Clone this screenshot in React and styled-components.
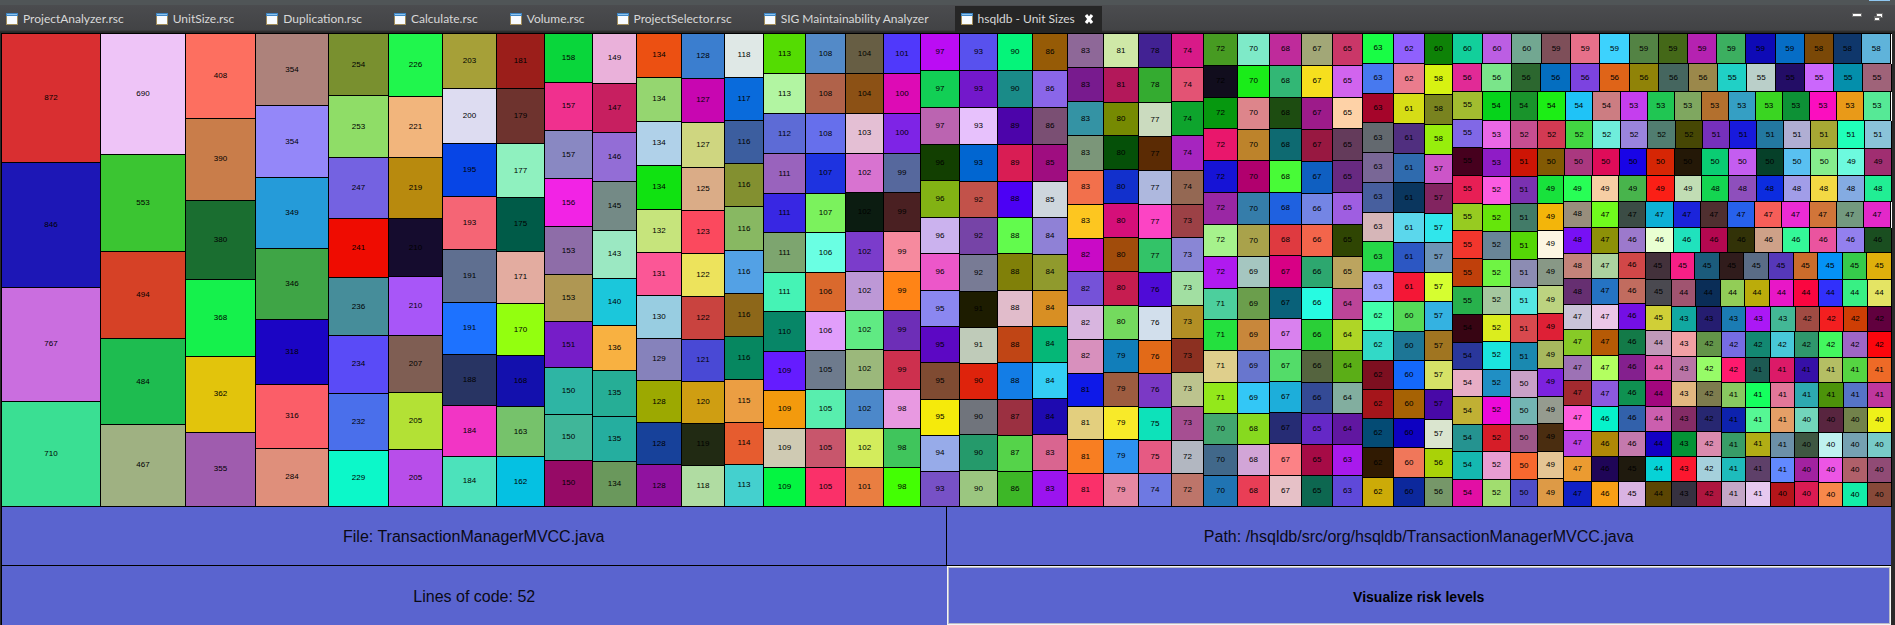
import React from "react";
import styled, { createGlobalStyle } from "styled-components";

const GlobalStyle = createGlobalStyle`
  *, *::before, *::after { box-sizing: border-box; }
  body { margin: 0; background: #2a2a2a; }
  button { font: inherit; color: inherit; }
`;

/* Each strip takes `size` of what is left of the map, along the axis across it.
   Units are "lines of code:colour", from the largest to the smallest. */
const strips = [
  ["col", 99, "872:d92f31 846:1d17b6 767:ca6edf 710:3adf93"],
  ["col", 85, "690:eec4f7 553:3bc532 494:d64126 484:1ebc50 467:9fb182"],
  ["col", 70, "408:fd6f60 390:c97d4a 380:1a6e30 368:15f14c 362:e2c40c 355:9f5cae"],
  ["col", 73, "354:ad827b 354:9487f9 349:259bd9 346:3fa546 318:1b05c4 316:fb5e68 284:df8f7b"],
  ["col", 60, "254:79902f 253:8fdd67 247:7462e1 241:ef0c01 236:468d9a 234:5a4bf7 232:4a6feb 229:0cf8c9"],
  ["col", 54, "226:20f64d 221:f2b57c 219:b88a0e 210:150c2e 210:a856f8 207:7f5e53 205:b3e135 205:b84eea"],
  ["col", 54, "203:a6a038 200:dddcf1 195:0745e6 193:f56575 191:5f6f90 191:1d72ff 188:283463 184:f235c5 184:4ce2bb"],
  ["col", 48, "181:9b1e1a 179:6e332e 177:8ff1bf 175:005b48 171:e3aca0 170:93ff0f 168:1310ad 163:76c26b 162:05c1e2"],
  ["col", 48, "158:09d63b 157:f0308e 157:8988c2 156:f223e5 153:8e6da8 153:af9753 151:761dc8 150:2eb5a4 150:40b699 150:960a66"],
  ["col", 44, "149:eab1da 147:c71f60 146:936dd6 145:748a86 143:9be8c2 140:1bc7db 136:f8b141 135:26ae96 135:25ae9f 134:6a985c"],
  ["col", 45, "134:ec5012 134:95d670 134:b0d1e9 134:10e211 132:c6e47c 131:fb5796 130:98cde1 129:8682bb 128:9ca901 128:17419a 128:90129f"],
  ["col", 43, "128:3b7ecf 127:c806b1 127:cfd680 125:daac87 123:fb495e 122:ede35c 122:c9433f 121:4949d5 120:cf9e12 119:212a13 118:b0dca2"],
  ["col", 39, "118:dfe8e6 117:096bdc 116:3c5e9f 116:839030 116:88b862 116:53a1e5 116:8d6719 116:068760 115:eb9e43 114:e65c2f 113:44d0ce"],
  ["col", 42, "113:54dc02 113:b2f5a2 112:5d6bd6 111:9963bd 111:3827e3 111:7da56f 111:45f3b5 110:078667 109:651cff 109:f39a0d 109:cfcab3 109:04f541"],
  ["col", 40, "108:538ac8 108:b0624a 108:666fec 107:1e33e0 107:7bf25d 106:6affe3 106:da692d 106:e19efb 105:6e7b8d 105:58eeae 105:c8566c 105:fa3069"],
  ["col", 38, "104:675e44 104:8c5115 103:e4bfd4 102:d873d0 102:0b1c11 102:7b3ccb 102:bd98d6 102:60ea83 102:9bb87b 102:4c88ca 102:d3ec5c 101:e97e41"],
  ["col", 37, "101:5039fb 100:dd0bb5 100:7e24e6 99:56689d 99:4a2022 99:f68a9e 99:ff8416 99:6d2eb7 99:cd304e 98:e899e1 98:40c55c 98:43ff03"],
  ["col", 39, "97:bb0cf4 97:12cf55 97:bb64b1 96:123f01 96:82b214 96:cbb2ee 96:ec57c9 95:8b87f0 95:5c08c4 95:7f4b32 95:f5ea0b 94:97abe9 93:7751c6"],
  ["col", 38, "93:5851ee 93:7318cb 93:e7c1fc 93:0166d1 92:c2524a 92:7644a7 92:787b95 91:1d1c00 91:bfcbb9 90:de230c 90:70747c 90:259a6b 90:9bc680"],
  ["col", 35, "90:05f47a 90:1a8b88 89:4c04aa 89:d91d54 88:4c01f4 88:62fb4d 88:808009 88:e1bccb 88:c04515 88:137de6 87:9b3041 87:55d34a 86:3db727"],
  ["col", 35, "86:965b06 86:8a66e9 86:7a4f73 85:9f0d80 85:ced6dd 84:8f81d6 84:909a2d 84:d88f23 84:05b777 84:34cef4 84:1e0ab0 83:d96590 83:9b14ef"],
  ["col", 36, "83:8e6898 83:781b8e 83:3493a4 83:7b9679 83:f2704c 83:fdc620 82:c90ac6 82:7552d8 82:d8b5df 82:d890bd 81:0e19e8 81:e3cf7e 81:f87e22 81:fa306a"],
  ["col", 35, "81:cfe8a7 81:b3185a 80:768a02 80:055008 80:1230cc 80:d50f79 80:a14c0b 80:c61d50 80:74da5e 79:117eba 79:9d5c40 79:f8ea29 79:2e92f0 79:e588a2"],
  ["col", 33, "78:422293 78:34ab30 77:cbdbbf 77:5b2b04 77:aeb8de 77:fc44c4 77:33c368 76:4f0bd7 76:d2dfec 76:e26a18 76:7b39c5 75:0de2ba 75:e65a83 74:6e79e2"],
  ["col", 32, "74:d81a88 74:e35374 74:0ea42d 74:a625bf 74:946853 73:9c4146 73:8986d5 73:a2dfa2 73:b28f25 73:8c3021 73:bcc38e 73:a64f92 72:b2b7c1 72:bd756a"],
  ["col", 34, "72:479b22 72:110d1d 72:06980f 72:e9176c 72:1613d6 72:9a27a4 72:a6f28c 72:b01aef 71:4ccf9d 71:24e03e 71:dfcf8c 71:93e81b 70:42a76f 70:41688a 70:2074b3"],
  ["col", 32, "70:7eeac8 70:1aec19 70:dd858b 70:bd832b 70:b1006e 70:357daa 70:a9a24b 69:a5c6c0 69:6b9e4c 69:c8873b 69:6876ce 69:33c7f6 68:87d91f 68:d2a5d7 68:e93e56"],
  ["col", 32, "68:bf2b9b 68:32b775 68:1d4c11 68:0e6a71 68:48fb37 68:1f61e0 68:df3a40 67:d80085 67:096179 67:d981ee 67:53dc69 67:1daeda 67:262c74 67:fc8286 67:e6c1c7"],
  ["col", 31, "67:a2a777 67:f6df1e 67:9d1b8a 67:981841 67:0f5fc1 66:7485e4 66:f3654b 66:2da76f 66:27fbe1 66:2acf37 66:55643f 66:344a95 65:6528c6 65:a60b46 65:0d6750"],
  ["col", 30, "65:ca3768 65:d164ee 65:fed2a7 65:643b5b 65:682a81 65:9f5ee1 65:2f4503 65:bca45f 64:bc4598 64:afd526 64:5bae17 64:82ae9f 64:6117a0 63:a91aec 63:5f49d9"],
  ["col", 31, "63:18fd45 63:4779ef 63:a5052a 63:63696f 63:796796 63:475f9e 63:d6b6b8 63:26d747 63:9fa0ff 62:43ffac 62:32d9c7 62:7d0f20 62:a5151b 62:044b74 62:301a02 62:ccab08"],
  ["col", 31, "62:9060fd 62:ea7c8d 61:d6dd16 61:502f7f 61:2f6bae 61:0a365e 61:5bd7ec 61:2c57c3 61:f41736 60:55da58 60:1d7696 60:1468fb 60:a66204 60:0d01c1 60:f0775a 60:0c289c"],
  ["col", 28, "60:0e8207 58:d7f212 58:79831f 58:97ee0c 57:cc55c8 57:822460 57:30e6eb 57:6e94b6 57:d6fe30 57:34b2e1 57:a07521 57:d6e267 57:4809a7 57:dae5cf 56:a9d208 56:769769"],
  ["row", 30, "60:12cf9b 60:bc5ee3 60:72a791 59:7e4f59 59:e7708a 59:3dd2fd 59:538344 59:446818 59:b522b1 59:3caf60 59:0e0ab6 59:066dc6 58:7a4807 58:0f376b 58:5fb3da", true],
  ["row", 28, "56:e12a96 56:7ae58a 56:2c672f 56:046ec0 56:7c43e0 56:df6418 56:908308 56:45665f 56:9b884b 55:20d0c6 55:bacfc9 55:230d66 55:cb67fc 55:048fab 55:9f6379"],
  ["col", 30, "55:a2bc30 55:8168e6 55:46001e 55:e71f55 55:97cb21 55:f2362d 55:c0400b 55:28b14c 54:370513 54:2a379b 54:e8adc5 54:c0b034 54:259390 54:15b8b0 54:e20fa4"],
  ["row", 29, "54:06d41b 54:19932b 54:1cee15 54:1fc3f7 54:cc7d82 53:c53eee 53:20c653 53:7fa760 53:b3702e 53:359fc4 53:3ad522 53:0d9136 53:fb0ebf 53:e99a18 53:56e996", true],
  ["col", 28, "53:ea68e6 53:8f1cc6 52:fb5ce1 52:65e60b 52:698597 52:6ff444 52:a5c79f 52:dbed1e 52:1be4de 52:208fc4 52:ed0ad9 52:d61d28 52:e89dd2 52:a1dd6f"],
  ["row", 28, "52:c74e90 52:d23a53 52:42d642 52:6feddb 52:9a84dd 52:517d70 52:464704 51:7630bc 51:181add 51:2378a0 51:b0aed3 51:a6a834 51:20ffb9 51:8ac3d9"],
  ["col", 27, "51:cd1505 51:7a31b1 51:427b68 51:55d706 51:8c8cb3 51:55e7e2 51:d8494e 51:1a89b0 50:c9a0c7 50:73b5b3 50:9e5788 50:f7682f 50:4f4dc8"],
  ["row", 27, "50:825a04 50:aa387f 50:df0c59 50:1904e6 50:d62605 50:241807 50:0acd73 50:c45df0 50:064029 50:59c0f1 50:86ed8d 49:6dfade 49:a02e71"],
  ["col", 26, "49:18e23c 49:f3b50a 49:fdf6e2 49:889886 49:bcd380 49:de2036 49:a7b85e 49:7c22df 49:959b8f 49:4a2d10 49:e5c594 49:dd9a46"],
  ["row", 26, "49:28fe56 49:f6cea4 49:48b44c 49:fb1f16 49:c1ddb4 48:14d551 48:8e4fbc 48:0c2cdf 48:a19de8 48:f3d944 48:84abe2 48:21ee94"],
  ["col", 28, "48:988e7c 48:7810f5 48:c3837a 48:662f71 47:cac4d8 47:87ca27 47:9d72b5 47:a22a2f 47:fe5ddd 47:bb40e4 47:eb9b31 47:1020c5"],
  ["row", 26, "47:70fb1d 47:3b4c45 47:0eb0d6 47:1b24db 47:4f2f30 47:2761ec 47:f65e59 47:eb2bd4 47:d17539 47:73997f 47:e328c9", true],
  ["col", 27, "47:8d9108 47:add29f 47:2573c3 47:ebc6e7 47:b65a05 47:b3ff60 47:8c59df 46:06f2ca 46:b08807 46:1f0557 46:f89f16"],
  ["row", 25, "46:9c79cc 46:e9ffd2 46:20e2bd 46:b40850 46:323208 46:cea188 46:34f898 46:ea549f 46:9380ee 46:1a4e20"],
  ["col", 27, "46:d14748 46:c16c5f 46:740fe5 46:137a48 46:84208e 46:0f9151 46:3261ab 46:c479ad 45:1f1a0e 45:d9b3e2"],
  ["row", 27, "45:43313b 45:f71f86 45:1b5b7b 45:301c1c 45:5a6c86 45:5638b9 45:cb6c2b 45:0592f6 45:36cb4b 45:dfb00c"],
  ["col", 26, "45:4a4950 45:d0cf37 44:c099b9 44:dd57a6 44:a2077e 44:cb5fae 44:1300c4 44:07d2d6 44:5b4503"],
  ["row", 27, "44:a05470 44:0a2d57 44:92cd57 44:bbac0b 44:e817c7 44:fa0640 44:3130fb 44:38f084 44:e4e464"],
  ["col", 25, "43:11a8a1 43:f1a0a4 43:b974a6 43:e2b780 43:842c66 43:049336 43:fc172f 43:363140"],
  ["row", 25, "43:251d70 43:1b7cb4 43:ab18f5 43:43b896 42:a04b43 42:f31f20 42:ce3e05 42:61003e"],
  ["col", 25, "42:639449 42:97fb68 42:7d7c4e 42:272771 42:db8bae 42:a5d0dc 42:ae163f"],
  ["row", 26, "42:766ce2 42:138872 42:48c8d8 42:2f976c 42:43f75f 42:9f66c6 42:fc060d"],
  ["col", 24, "42:ff1a6e 41:88c960 41:0d22ae 41:389c67 41:1ebcbc 41:c4a7c7"],
  ["row", 25, "41:1d5a53 41:dc1a68 41:3610a7 41:b4be64 41:55d542 41:ee6a27"],
  ["col", 25, "41:15ff5e 41:56f794 41:b1ad15 41:5e4069 41:e6c8ef"],
  ["row", 25, "41:e27799 41:2da9b1 41:4c930a 41:5674c7 41:bf379d"],
  ["col", 24, "41:e59f67 41:6c90a8 41:6289ff 40:b4151a"],
  ["row", 25, "40:72d5bb 40:58253f 40:72824b 40:eef119"],
  ["col", 24, "40:3e5742 40:a222a0 40:db1b52"],
  ["row", 25, "40:bff1f0 40:75a1b2 40:78cbc8"],
  ["row", 25, "40:ec55e4 40:b0606a 40:904b75"],
  ["row", 24, "40:f7884b 40:13eda8 40:874939"],
];

const tabs = [
  "ProjectAnalyzer.rsc",
  "UnitSize.rsc",
  "Duplication.rsc",
  "Calculate.rsc",
  "Volume.rsc",
  "ProjectSelector.rsc",
  "SIG Maintainability Analyzer",
  "hsqldb - Unit Sizes",
];

const Window = styled.div`
  display: flex;
  flex-direction: column;
  min-height: 100vh;
`;

const TopStrip = styled.div`
  display: flex;
  justify-content: flex-end;
  height: 5px;
  padding-right: 5px;
  background: #505557;
`;

const Highlight = styled.div`
  width: 21px;
  height: 1px;
  background: #8fc7f2;
`;

const TabBar = styled.div`
  display: flex;
  height: 28px;
  padding-top: 1px;
  background: linear-gradient(#4b4c4f, #424345 25px, #343434 26px, #282828 27px);
`;

const TabList = styled.div`
  display: flex;
  flex: 1;
  min-width: 0;
`;

const Tab = styled.button`
  display: flex;
  align-items: center;
  gap: 5px;
  height: 27px;
  padding: 0 26px 2px 6px;
  border: 0;
  background: none;
  color: #d8d8d8;
  font: 12px/16px Lato, "Noto Sans", sans-serif;
  white-space: nowrap;

  &[aria-selected="true"] {
    padding-right: 8px;
    background: #262626;
  }
`;

const CloseMark = styled.svg`
  margin-left: 4px;
`;

const WindowControls = styled.div`
  display: flex;
  align-items: flex-start;
  gap: 12px;
  padding: 7px 12px 0 0;
`;

const Control = styled.button`
  display: flex;
  padding: 0;
  border: 0;
  background: none;
`;

const View = styled.main`
  display: flex;
  flex: 1;
  flex-direction: column;
  margin: 0 3px 0 1px;
`;

const Map = styled.section`
  display: flex;
  flex: 1;
  min-height: 400px;
  border: solid #000;
  border-width: 1px 0 0 1px;
  color: #000;
  font: 8px/10px "Liberation Sans", Arial, sans-serif;
`;

const Split = styled.div`
  display: flex;
  flex: ${(p) => p.$size} 1 0;
  flex-direction: ${(p) => (p.$across === "col" ? "row" : "column")};
  min-width: 0;
  min-height: 0;
`;

const Strip = styled.div`
  display: flex;
  flex: ${(p) => p.$size} 1 0;
  flex-direction: ${(p) => (p.$kind === "col" ? "column" : "row")};
  min-width: 0;
  min-height: 0;
  padding-right: ${(p) => (p.$short ? 1 : 0)}px;
  background: #fff;
`;

const Unit = styled.div`
  display: flex;
  flex: ${(p) => p.$lines} 1 0;
  align-items: center;
  justify-content: center;
  min-width: 0;
  min-height: 0;
  border: solid #000;
  border-width: 0 1px 1px 0;
  background: #${(p) => p.$color};
`;

const Details = styled.section`
  display: grid;
  grid-template-columns: 1fr 1fr;
  grid-auto-rows: 59px;
  margin-right: 1px;
  border-left: 1px solid #000;
  background: #5a64cf;
  color: #0a0a14;
  font: 16px/20px "Liberation Sans", Arial, sans-serif;
`;

const Detail = styled.div`
  display: flex;
  align-items: center;
  justify-content: center;
  padding-top: 2px;
  border: solid #000;
  border-width: 0 ${(p) => (p.$last ? 0 : 1)}px ${(p) => (p.$bottom ? 0 : 1)}px 0;
`;

const RiskButton = styled.button`
  border: 1px solid #f4f4f4;
  box-shadow: inset 0 0 0 1px #b9bbc8;
  padding: 2px 0 0;
  background: #5a64cf;
  color: #000;
  font: bold 14px/16px "Liberation Sans", Arial, sans-serif;
`;

const FormIcon = () => (
  <svg width="12" height="12" viewBox="0 0 12 12" aria-hidden="true">
    <rect width="12" height="12" fill="#a08c5a" />
    <rect width="12" height="3" fill="#3f86c4" />
    <rect x="1" y="1" width="10" height="1" fill="#8cc4ee" />
    <rect x="1" y="3" width="10" height="8" fill="#f7fbff" />
  </svg>
);

function Treemap({ items, across, size }) {
  const [[kind, length, units, short], ...rest] = items;
  const left = kind === "col" ? size.width : size.height;
  const remaining =
    kind === "col"
      ? { ...size, width: left - length }
      : { ...size, height: left - length };
  return (
    <Split $size={across} $across={kind}>
      <Strip $size={length} $kind={kind} $short={short}>
        {units.split(" ").map((unit, i) => {
          const [lines, color] = unit.split(":");
          return (
            <Unit key={i} $lines={lines} $color={color}>
              {lines}
            </Unit>
          );
        })}
      </Strip>
      {rest.length > 0 && (
        <Treemap items={rest} across={left - length} size={remaining} />
      )}
    </Split>
  );
}

export default function App() {
  return (
    <Window>
      <GlobalStyle />
      <TopStrip>
        <Highlight />
      </TopStrip>
      <TabBar>
        <TabList role="tablist">
          {tabs.map((name, i) => (
            <Tab key={name} role="tab" aria-selected={i === tabs.length - 1}>
              <FormIcon />
              {name}
              {i === tabs.length - 1 && (
                <CloseMark width="10" height="10" viewBox="0 0 10 10" aria-hidden="true">
                  <path d="M2 1l6 8M8 1L2 9" stroke="#fff" strokeWidth="3" />
                </CloseMark>
              )}
            </Tab>
          ))}
        </TabList>
        <WindowControls>
          <Control aria-label="Minimize">
            <svg width="10" height="4" viewBox="0 0 10 4">
              <rect width="10" height="4" fill="#6c6c6c" />
              <rect x="1" y="1" width="8" height="2" fill="#fff" />
            </svg>
          </Control>
          <Control aria-label="Restore">
            <svg width="9" height="9" viewBox="0 0 9 9">
              <path d="M2 0h7v5H6v3H0V3h2z" fill="#6c6c6c" />
              <path d="M3 1h5v3H7V3H3zM1 5h4v2H1z" fill="#fff" />
            </svg>
          </Control>
        </WindowControls>
      </TabBar>
      <View>
        <Map aria-label="Unit sizes">
          <Treemap items={strips} across={1} size={{ width: 1890, height: 473 }} />
        </Map>
        <Details>
          <Detail>File: TransactionManagerMVCC.java</Detail>
          <Detail $last>Path: /hsqldb/src/org/hsqldb/TransactionManagerMVCC.java</Detail>
          <Detail $bottom $last>Lines of code: 52</Detail>
          <RiskButton>Visualize risk levels</RiskButton>
        </Details>
      </View>
    </Window>
  );
}
